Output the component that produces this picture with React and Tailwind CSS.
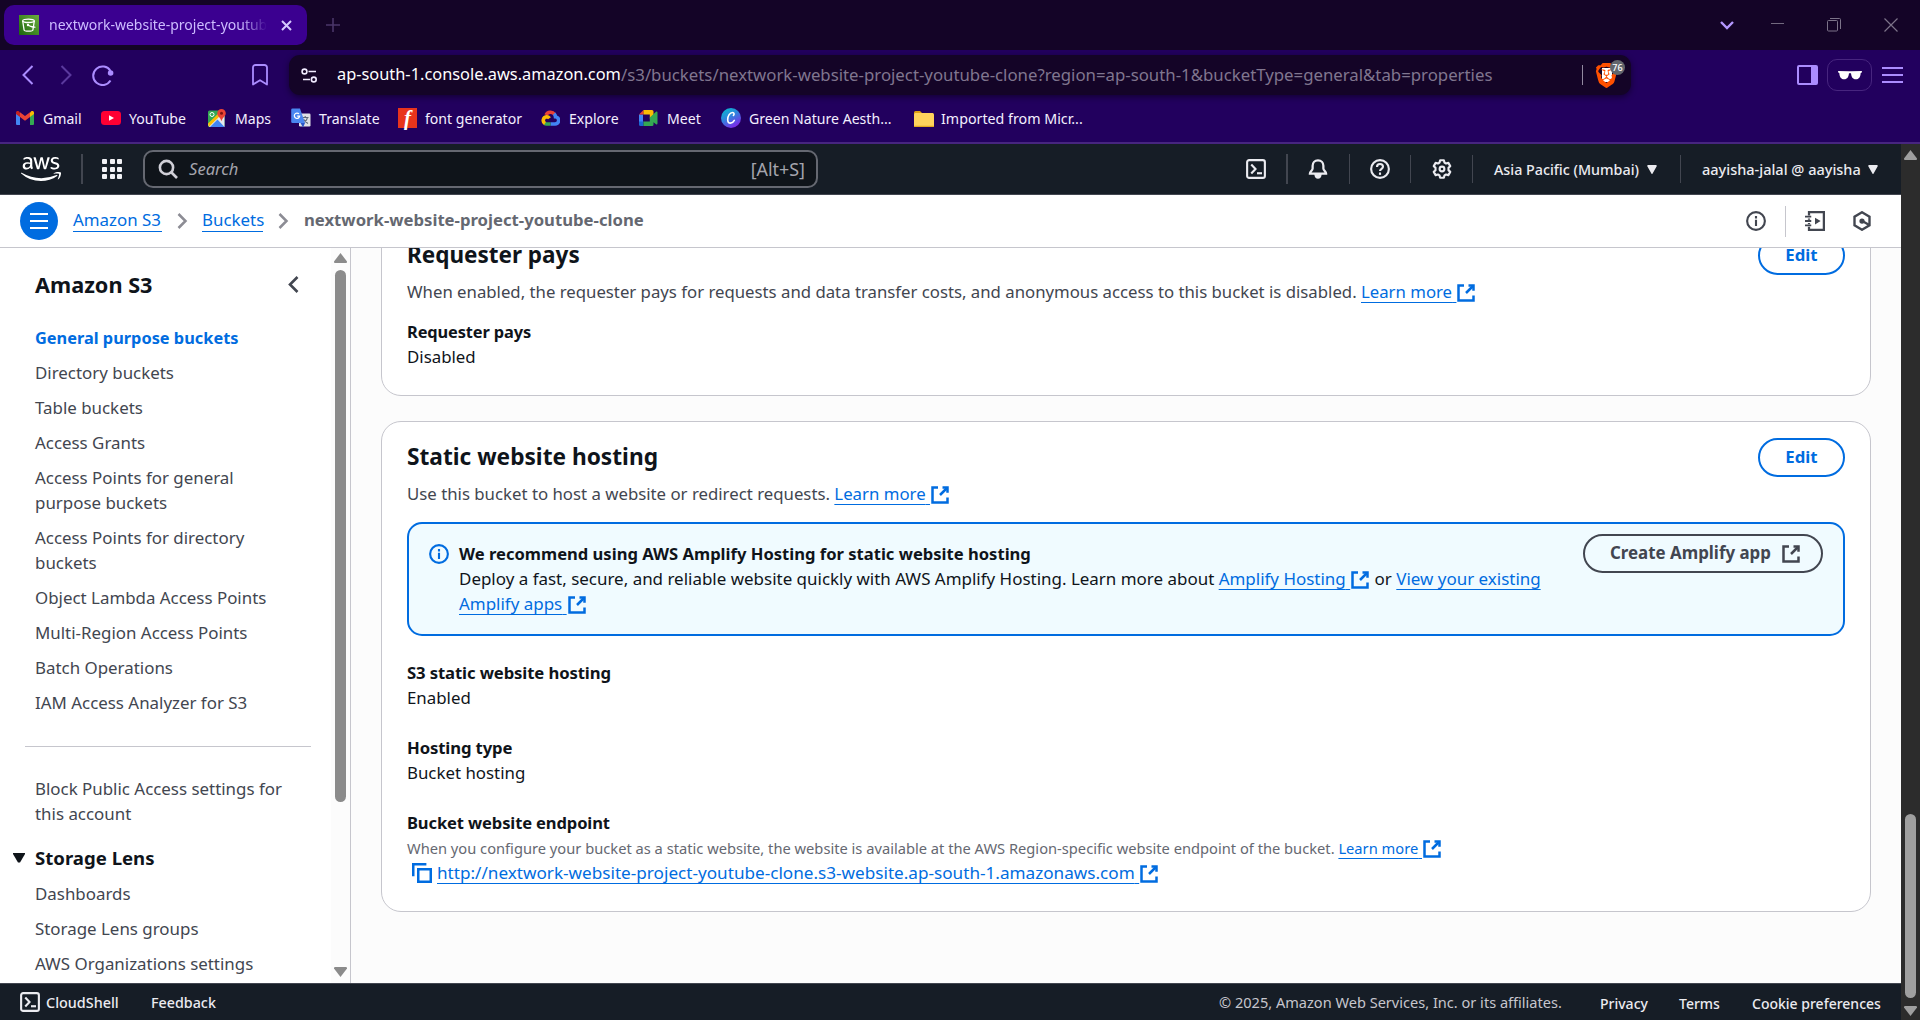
import { FaAws } from "react-icons/fa";
import { SiBrave } from "react-icons/si";

/* ---------- shared pieces ---------- */

function Icon({ children, className = "", size = 20, sw = 2 }) {
  return (
    <svg
      width={size}
      height={size}
      viewBox="0 0 16 16"
      fill="none"
      stroke="currentColor"
      strokeWidth={sw}
      className={"block shrink-0 " + className}
    >
      {children}
    </svg>
  );
}

function ExternalGlyph() {
  return (
    <>
      <path d="M10 2h4v4.2" />
      <path d="M8 8l5.8-5.8" />
      <path d="M6.4 2H2v12h12v-4" />
    </>
  );
}

function External() {
  return (
    <svg width="20" height="20" viewBox="0 0 16 16" fill="none" stroke="currentColor" strokeWidth="2" className="inline-block align-[-4.5px]">
      <ExternalGlyph />
    </svg>
  );
}

function Link({ children, external = true }) {
  return (
    <span className="whitespace-nowrap text-[#006ce0]">
      <span className="underline decoration-1 underline-offset-[4px] [text-decoration-skip-ink:none]">
        {children}
        {external ? "\u00a0" : ""}
      </span>
      {external && <External />}
    </span>
  );
}

function ShellIcon({ className = "" }) {
  return (
    <Icon className={className} sw={1.7}>
      <rect x="0.9" y="0.9" width="14.2" height="14.2" rx="1.6" />
      <path d="M4.2 4.4L7.6 8l-3.4 3.6" />
      <path d="M8.800 11.400h4" />
    </Icon>
  );
}

function Caret({ className = "" }) {
  return (
    <svg width="10" height="9" viewBox="0 0 10 9" className={"block shrink-0 " + className} fill="currentColor">
      <path d="M1 0h8a.8.8 0 0 1 .7 1.2L5.6 8.4a.7.7 0 0 1-1.2 0L.3 1.2A.8.8 0 0 1 1 0z" />
    </svg>
  );
}

/* ---------- browser chrome ---------- */

function TabStrip() {
  return (
    <div className="flex h-[50px] shrink-0 items-center bg-[#140427] pl-1">
      <div className="flex h-10 w-[303px] items-center rounded-[10px] bg-[#3b0090] pl-[15px]">
        <svg width="20" height="20" viewBox="0 0 20 20" className="shrink-0">
          <defs>
            <linearGradient id="s3" x1="0" y1="1" x2="1" y2="0">
              <stop offset="0" stopColor="#1b660f" />
              <stop offset="1" stopColor="#6cae3e" />
            </linearGradient>
          </defs>
          <rect width="20" height="20" fill="url(#s3)" />
          <g fill="none" stroke="#fff" strokeWidth="1.3">
            <ellipse cx="9.5" cy="5.8" rx="5.8" ry="1.7" />
            <path d="M3.7 6l1.4 9c.2 1.6 8.600 1.600 8.800 0l1.400-9" />
            <path d="M9 10c2 1.400 6 2.600 7.400 2" />
          </g>
          <circle cx="9" cy="10" r="1.200" fill="#fff" />
        </svg>
        <div className="ml-2.5 w-[218px] overflow-hidden pb-0.5 text-[14px] whitespace-nowrap text-[#cdbcff] [mask-image:linear-gradient(to_right,black_88%,transparent)]">
          nextwork-website-project-youtube-clone
        </div>
        <svg width="11" height="11" viewBox="0 0 11 11" className="ml-[14px]" stroke="#d6c8ff" strokeWidth="2">
          <path d="M1 1l9 9M10 1l-9 9" />
        </svg>
      </div>
      <svg width="14" height="14" viewBox="0 0 14 14" className="ml-[19px]" stroke="#4a3669" strokeWidth="1.600">
        <path d="M7 0v14M0 7h14" />
      </svg>
      <svg width="14" height="9" viewBox="0 0 14 9" className="ml-auto" fill="none" stroke="#b497ff" strokeWidth="2.400">
        <path d="M1 1l6 6 6-6" />
      </svg>
      <svg width="13" height="14" viewBox="0 0 13 14" className="ml-[37px]" stroke="#72697f" strokeWidth="1">
        <path d="M0 5.500h13" />
      </svg>
      <svg width="14" height="14" viewBox="0 0 14 14" className="ml-[43px]" fill="none" stroke="#7c7389" strokeWidth="1">
        <rect x="0.500" y="2.500" width="10" height="10.500" rx="1" />
        <path d="M3 .5h9.500a1 1 0 0 1 1 1V11" />
      </svg>
      <svg width="14" height="14" viewBox="0 0 14 14" className="mr-[22px] ml-[43px]" stroke="#7c7389" strokeWidth="1.200">
        <path d="M.5.500l13 13M13.500.500l-13 13" />
      </svg>
    </div>
  );
}

function Toolbar() {
  return (
    <div className="flex h-[50px] items-center">
      <svg width="12" height="20" viewBox="0 0 12 20" className="ml-[22px]" fill="none" stroke="#ab8cff" strokeWidth="2">
        <path d="M10.500 1L1.500 10l9 9" />
      </svg>
      <svg width="12" height="20" viewBox="0 0 12 20" className="ml-[26px]" fill="none" stroke="#5a399d" strokeWidth="2">
        <path d="M1.500 1l9 9-9 9" />
      </svg>
      <svg width="22" height="21" viewBox="0 0 22 21" className="ml-5" fill="none" stroke="#ab8cff" strokeWidth="2">
        <path d="M18.500 6A9.300 9.300 0 1 0 18.500 15.500" />
        <circle cx="18.600" cy="8" r="2.800" fill="#ab8cff" stroke="none" />
      </svg>
      <svg width="16" height="22" viewBox="0 0 16 22" className="ml-[138px]" fill="none" stroke="#ab8cff" strokeWidth="1.800" strokeLinejoin="round">
        <path d="M1 3.500A2.500 2.500 0 0 1 3.500 1h9A2.500 2.500 0 0 1 15 3.500V20.500l-7-4.300-7 4.300z" />
      </svg>
      <div className="ml-[21px] flex h-10 w-[1342px] items-center rounded-[11px] bg-[#140427] pl-3 shadow-[0_2px_6px_rgba(0,0,0,0.45)]">
        <svg width="17" height="15" viewBox="0 0 17 15" fill="none" stroke="#f0eaff" strokeWidth="1.600">
          <circle cx="3.500" cy="3.500" r="2.400" />
          <path d="M7.500 3.500H15M2 11.500h7" />
          <circle cx="12.800" cy="11.500" r="2.400" />
        </svg>
        <div className="ml-[19px] flex whitespace-nowrap">
          <span className="w-[284px] text-[16.36px] text-white">ap-south-1.console.aws.amazon.com</span>
          <span className="text-[16.79px] text-[#80768f]">
            /s3/buckets/nextwork-website-project-youtube-clone?region=ap-south-1&amp;bucketType=general&amp;tab=properties
          </span>
        </div>
        <div className="mr-[14px] ml-auto h-5 w-px bg-[#9289a0]" />
        <div className="relative mr-[14px] h-[23px] w-5">
          <div className="absolute top-[4px] left-[5px] h-3.5 w-2.5 bg-white" />
          <SiBrave className="absolute -top-px -left-[3px] h-[25px] w-[25px] text-[#ff5000]" />
          <div className="absolute -top-[4px] left-[13px] flex h-[15px] w-[15px] items-center justify-center rounded-full bg-[#63666d] text-[9px] leading-none font-medium text-white">
            76
          </div>
        </div>
      </div>
      <svg width="21" height="20" viewBox="0 0 21 20" className="ml-auto" fill="none" stroke="#ab8cff" strokeWidth="2">
        <rect x="1" y="1" width="19" height="18" rx="1" />
        <rect x="14" y="1" width="6" height="18" fill="#ab8cff" stroke="none" />
      </svg>
      <div className="ml-[9px] flex h-8 w-[45px] items-center justify-center rounded-[10px] border border-[#47257f]">
        <svg width="24" height="10" viewBox="0 0 24 10" fill="#fff">
          <path d="M0 1l10.500.3c1 0 2 0 3 0L24 1l-.4 1.800-.9.200c-.3 4-1.700 6.300-5 6.300-3 0-4.300-2.300-4.700-6h-2c-.4 3.700-1.700 6-4.700 6-3.300 0-4.700-2.300-5-6.300L.4 2.800z" />
        </svg>
      </div>
      <div className="mr-[17px] ml-2.5 flex w-[21px] flex-col gap-[5px]">
        <div className="h-0.5 bg-[#ab8cff]" />
        <div className="h-0.5 bg-[#ab8cff]" />
        <div className="h-0.5 bg-[#ab8cff]" />
      </div>
    </div>
  );
}

const bookmarks = [
  {
    name: "Gmail",
    cls: "w-[85px] gap-[9px]",
    icon: (
      <svg width="18" height="14" viewBox="0 0 18 14">
        <path d="M0 2.500V13a1 1 0 0 0 1 1h3V5z" fill="#4285f4" />
        <path d="M18 2.500V13a1 1 0 0 1-1 1h-3V5z" fill="#34a853" />
        <path d="M14 1.500V6l4-3V1.800C18 .2 16.300-.5 15 .500z" fill="#fbbc04" />
        <path d="M0 3l4 3V1.500L3 .500C1.700-.5 0 .2 0 1.800z" fill="#c5221f" />
        <path d="M4 6V1.300L9 5l5-3.700V6L9 9.700z" fill="#ea4335" />
      </svg>
    ),
  },
  {
    name: "YouTube",
    cls: "w-[107px] gap-2",
    icon: (
      <svg width="20" height="14" viewBox="0 0 20 14">
        <rect width="20" height="14" rx="3.500" fill="#ff0033" />
        <path d="M8 4.200l5 2.800-5 2.800z" fill="#fff" />
      </svg>
    ),
  },
  {
    name: "Maps",
    cls: "w-[83px] gap-[9px]",
    icon: (
      <svg width="18" height="19" viewBox="0 0 18 19">
        <rect x="0" y="1.500" width="16.500" height="16.500" rx="1.500" fill="#34a853" />
        <path d="M0 15.500L12.500 3l4 4v11H1.500z" fill="#e8eaed" />
        <path d="M2 18l7.500-7.500 7 7.500z" fill="#4285f4" />
        <path d="M0 14.500L11 4l2 2L1 17.800z" fill="#fbbc04" />
        <circle cx="4" cy="5.500" r="2" fill="none" stroke="#fff" />
        <path d="M13.500 0a4.300 4.300 0 0 1 4.300 4.300c0 3-3.300 4-4.300 8-1-4-4.300-5-4.300-8A4.300 4.300 0 0 1 13.500 0z" fill="#ea4335" />
        <circle cx="13.500" cy="4.300" r="1.500" fill="#811411" />
      </svg>
    ),
  },
  {
    name: "Translate",
    cls: "w-[107px] gap-2",
    icon: (
      <svg width="20" height="20" viewBox="0 0 20 20">
        <rect x="8" y="5.500" width="11.500" height="13" rx="1.200" fill="#dfe1e5" />
        <path d="M11 9.500h6.500M14.200 8v1.500M16.500 9.500c-.5 2.500-2.500 4.500-4.500 5.500M12.500 11c.8 1.800 2.500 3.500 4.500 4.500" stroke="#5f6b7a" strokeWidth="1.100" fill="none" />
        <path d="M1.500.500H9l5 14.500H1.500A1.300 1.300 0 0 1 .2 13.700V1.800A1.300 1.300 0 0 1 1.500.500z" fill="#4a86f0" />
        <path d="M9.500 15H14l-2 4.500z" fill="#2a56c6" />
        <path d="M8 5.900a2.700 2.700 0 1 0 .7 2.300H6.200" stroke="#fff" strokeWidth="1.200" fill="none" />
      </svg>
    ),
  },
  {
    name: "font generator",
    cls: "w-[143px] gap-2",
    icon: (
      <div className="flex h-5 w-[19px] items-center justify-center bg-[#e8341c] font-['Liberation_Serif'] text-[21px] leading-none font-bold text-white italic">
        f
      </div>
    ),
  },
  {
    name: "Explore",
    cls: "w-[98px] gap-[9px]",
    icon: (
      <svg width="19" height="16" viewBox="0 0 19 16" fill="none" strokeWidth="3.600">
        <path d="M5 5A5 5 0 0 1 13.500 4.300" stroke="#ea4335" />
        <path d="M13 3.800a5 5 0 0 1 1.500 3A3.600 3.600 0 0 1 13.500 14H9.500" stroke="#4285f4" />
        <path d="M9.500 14H5.500a3.500 3.500 0 0 1-2-.7" stroke="#34a853" />
        <path d="M4 13.500a3.700 3.700 0 0 1 1.500-6.800 3.700 3.700 0 0 1 3 1.500" stroke="#fbbc04" />
      </svg>
    ),
  },
  {
    name: "Meet",
    cls: "w-[82px] gap-[9px]",
    icon: (
      <svg width="19" height="16" viewBox="0 0 19 16">
        <path d="M0 4.500h4V12H0z" fill="#4285f4" />
        <path d="M4.500 0v4.500H0z" fill="#ea4335" />
        <path d="M4.500 0H13a1.500 1.500 0 0 1 1.500 1.500V8l-3.700.5V4.500H4.500z" fill="#fbbc04" />
        <path d="M0 11.500h4.500V16H1.500A1.500 1.500 0 0 1 0 14.500z" fill="#1967d2" />
        <path d="M4.500 11.500h6.300V7.500L17 1.800c.6-.5 1.500-.2 1.500.7v11c0 .9-.9 1.200-1.500.700l-2.500-2v2.300A1.500 1.500 0 0 1 13 16H4.500z" fill="#34a853" />
      </svg>
    ),
  },
  {
    name: "Green Nature Aesth...",
    cls: "w-[193px] gap-2",
    icon: (
      <svg width="20" height="20" viewBox="0 0 20 20">
        <defs>
          <linearGradient id="cv" x1="0" y1="0" x2=".6" y2="1">
            <stop offset="0" stopColor="#00c4cc" />
            <stop offset=".5" stopColor="#2f86dd" />
            <stop offset="1" stopColor="#7d2ae8" />
          </linearGradient>
        </defs>
        <circle cx="10" cy="10" r="10" fill="url(#cv)" />
        <path d="M12.400 7.500c1-.9 1-3-.9-3-2.600 0-4.800 3.500-4.800 6.900 0 2.300 1.100 3.700 2.800 3.700 1.600 0 2.900-1 3.800-2.700" stroke="#fff" strokeWidth="1.600" fill="none" strokeLinecap="round" />
      </svg>
    ),
  },
  {
    name: "Imported from Micr...",
    cls: "w-[180px] gap-[7px] text-[14.250px]",
    icon: (
      <svg width="20" height="16" viewBox="0 0 20 16">
        <path d="M0 1.500A1.500 1.500 0 0 1 1.500 0H6l2 2H19v4H0z" fill="#e0a011" />
        <rect y="2" width="20" height="14" rx="1.500" fill="#ffd35c" />
        <rect y="14.800" width="20" height="1.200" rx=".6" fill="#e3a921" />
      </svg>
    ),
  },
];

function Bookmarks() {
  return (
    <div className="flex h-[37px] items-center pl-4 text-[14.1px] whitespace-nowrap text-[#f3efff]">
      {bookmarks.map((b) => (
        <div key={b.name} className={"flex shrink-0 items-center " + b.cls}>
          <div className="shrink-0">{b.icon}</div>
          {b.name}
        </div>
      ))}
    </div>
  );
}

/* ---------- console header ---------- */

function ConsoleHeader() {
  return (
    <div className="flex h-[51px] shrink-0 items-center border-b border-[#424650] bg-[#161d26] text-[#ebebf0]">
      <FaAws className="ml-[21px] h-8 w-10 shrink-0 text-white" />
      <div className="ml-5 h-[30px] w-0.5 bg-[#424650]" />
      <div className="ml-[19px] grid grid-cols-3 gap-[2.500px]">
        {[...Array(9)].map((_, i) => (
          <div key={i} className="h-[5px] w-[5px] rounded-[1px] bg-[#f1f1f5]" />
        ))}
      </div>
      <div className="ml-[21px] flex h-[38px] w-[675px] items-center rounded-[10px] border-2 border-[#656871] bg-[#0f141a] px-[13px]">
        <svg width="20" height="20" viewBox="0 0 20 20" fill="none" stroke="#d0d0d8" strokeWidth="2.600">
          <circle cx="8.500" cy="8.500" r="6.600" />
          <path d="M13 13l6 6" />
        </svg>
        <span className="ml-[11px] text-[16.6px] text-[#a4a4ad] italic">Search</span>
        <span className="mr-[-2px] ml-auto text-[17.9px] text-[#a4a4ad]">[Alt+S]</span>
      </div>
      <ShellIcon className="ml-auto" />
      <div className="ml-5 h-[30px] w-0.5 bg-[#424650]" />
      <Icon className="ml-5" sw={1.8}>
        <path d="M8 1.100c-2.700 0-4.300 1.900-4.300 4.300v2.100c0 1.700-2.200 2.500-2.200 4.200h13c0-1.700-2.200-2.500-2.200-4.200V5.400c0-2.400-1.600-4.300-4.300-4.300z" />
        <path d="M6 12.500c.2 1.700.9 2.300 2 2.300s1.800-.6 2-2.300z" fill="currentColor" />
      </Icon>
      <div className="ml-[21px] h-[30px] w-px bg-[#424650]" />
      <Icon className="ml-5" sw={1.700}>
        <circle cx="8" cy="8" r="7.100" />
        <path d="M5.600 6.400C5.600 4.900 6.700 4 8 4s2.400.9 2.400 2.200C10.400 7.800 8 7.900 8 9.600" />
        <path d="M8 10.800v1.900" />
      </Icon>
      <div className="ml-5 h-7 w-px bg-[#424650]" />
      <Icon className="ml-[21px]" sw={1.700}>
        <path
          strokeLinejoin="round"
          d="M6.500 1h3l.5 1.900 1.200.7 1.900-.5 1.500 2.600L13.200 7v1.900l1.400 1.400-1.500 2.600-1.900-.5-1.200.7L9.500 15h-3L6 13.100l-1.200-.7-1.900.5-1.500-2.600L2.800 9V7L1.400 5.700l1.500-2.600 1.900.5L6 2.900z"
        />
        <circle cx="8" cy="8" r="1.900" />
      </Icon>
      <div className="ml-5 h-7 w-px bg-[#424650]" />
      <span className="ml-[21px] w-[145px] pt-0.5 text-[14.3px] font-medium whitespace-nowrap">Asia Pacific (Mumbai)</span>
      <Caret className="ml-2" />
      <div className="ml-[23px] h-7 w-px bg-[#424650]" />
      <span className="ml-[21px] w-[159px] pt-0.5 text-[14.5px] font-medium whitespace-nowrap">aayisha-jalal @ aayisha</span>
      <Caret className="mr-[23px] ml-[7px]" />
    </div>
  );
}

function Chevron({ className = "" }) {
  return (
    <svg width="11" height="16" viewBox="0 0 11 16" fill="none" stroke="#8c8c94" strokeWidth="2.500" className={"shrink-0 " + className}>
      <path d="M1.500 1l7 7-7 7" />
    </svg>
  );
}

function BreadcrumbBar() {
  const link = "mb-[2px] border-b border-[#006ce0] text-[#006ce0] leading-[22px]";
  return (
    <div className="flex h-[53px] shrink-0 items-center border-b border-[#c6c6cd] bg-white text-[16.900px] whitespace-nowrap">
      <div className="ml-5 flex h-[38px] w-[38px] shrink-0 flex-col items-center justify-center gap-[5px] rounded-full bg-[#006ce0]">
        <div className="h-0.5 w-[18px] bg-white" />
        <div className="h-0.5 w-[18px] bg-white" />
        <div className="h-0.5 w-[18px] bg-white" />
      </div>
      <span className={"ml-[15px] w-[89px] " + link}>Amazon S3</span>
      <Chevron className="ml-[15px]" />
      <span className={"ml-[14px] w-[61px] " + link}>Buckets</span>
      <Chevron className="ml-[15px]" />
      <span className="mb-[2px] ml-[15px] text-[16.700px] leading-[24px] font-bold text-[#656871]">nextwork-website-project-youtube-clone</span>
      <Icon className="ml-auto text-[#424650]" sw={1.700}>
        <circle cx="8" cy="8" r="7.100" />
        <path d="M8 7v5M8 4v2" />
      </Icon>
      <div className="ml-[19px] h-[31px] w-px bg-[#c6c6cd]" />
      <Icon className="ml-[19px] text-[#424650]" sw={1.800}>
        <path d="M3.200 3.500V.900h11.900v14.200H3.200v-2.600M3.200 6v1M3.200 9.500v1" />
        <path d="M0 4.500h5M0 8h5M0 11.500h5" strokeWidth="1.500" />
        <path d="M8 5.300l4.500 2.700L8 10.700z" fill="currentColor" stroke="none" />
      </Icon>
      <Icon className="mr-[29px] ml-[27px] text-[#424650]" sw={1.900}>
        <path d="M8 1l6 3.500v7L8 15l-6-3.500v-7z" />
        <circle cx="8" cy="8" r="2.100" fill="currentColor" stroke="none" />
        <path d="M8.500 8.200l5 2.800" />
      </Icon>
    </div>
  );
}

/* ---------- side navigation ---------- */

const navItems = [
  "Directory buckets",
  "Table buckets",
  "Access Grants",
  "Access Points for general purpose buckets",
  "Access Points for directory buckets",
  "Object Lambda Access Points",
  "Multi-Region Access Points",
  "Batch Operations",
  "IAM Access Analyzer for S3",
];

function SideNav() {
  return (
    <div className="flex h-full w-[351px] shrink-0 border-r border-[#c6c6cd] bg-white">
      <nav className="h-full w-[331px] overflow-hidden text-[16.900px] leading-[25px] text-[#424650]">
        <div className="mt-[22px] flex h-[30px] items-center pr-8 pl-[35px]">
          <span className="text-[21.700px] leading-[30px] font-bold text-[#0f141a]">Amazon S3</span>
          <svg width="11" height="17" viewBox="0 0 11 17" className="mb-0.5 ml-auto" fill="none" stroke="#424650" strokeWidth="2.600">
            <path d="M9.500 1L2 8.500l7.500 7.500" />
          </svg>
        </div>
        <div className="mt-[25px] flex flex-col gap-2.5 pl-[35px]">
          <span className="h-[25px] text-[16.350px] leading-[27px] font-bold text-[#006ce0]">General purpose buckets</span>
          {navItems.map((t) => (
            <span key={t} className="w-[240px]">
              {t}
            </span>
          ))}
        </div>
        <div className="mt-[31px] ml-[25px] h-px w-[286px] bg-[#c6c6cd]" />
        <div className="mt-[29px] w-[290px] pl-[35px]">Block Public Access settings for this account</div>
        <div className="mt-[19px] flex items-center pl-[13px]">
          <svg width="12" height="10" viewBox="0 0 12 10" fill="#0f141a">
            <path d="M0 0h12v1L7 9.500H5L0 1z" />
          </svg>
          <span className="ml-2.5 text-[18.580px] font-bold text-[#0f141a]">Storage Lens</span>
        </div>
        <div className="mt-[11px] flex flex-col gap-2.5 pl-[35px]">
          <span>Dashboards</span>
          <span>Storage Lens groups</span>
          <span>AWS Organizations settings</span>
        </div>
      </nav>
      <div className="flex w-[19px] flex-col items-center bg-[#fcfcfc]">
        <svg width="13" height="10" viewBox="0 0 13 10" className="mt-[5px]" fill="#8b8b8b">
          <path d="M6.500 0L13 8.500c0 1-.5 1.500-1.200 1.500H1.200C.5 10 0 9.500 0 8.500z" />
        </svg>
        <div className="mt-[7px] h-[532px] w-[11px] rounded-full bg-[#8b8b8b]" />
        <svg width="13" height="10" viewBox="0 0 13 10" className="mt-auto mb-1.5" fill="#8b8b8b">
          <path d="M6.500 10L13 1.500C13 .5 12.500 0 11.800 0H1.200C.5 0 0 .5 0 1.500z" />
        </svg>
      </div>
    </div>
  );
}

/* ---------- main panel ---------- */

function EditButton() {
  return (
    <button className="h-[39px] w-[87px] shrink-0 rounded-full border-2 border-[#006ce0] bg-white pb-0.5 text-[16.800px] leading-[25px] font-bold text-[#006ce0]">
      Edit
    </button>
  );
}

function Field({ label, value, className = "", labelClass = "text-[16.700px]" }) {
  return (
    <div className={className}>
      <div className={"font-bold tracking-[-0.12px] " + labelClass}>{label}</div>
      <div>{value}</div>
    </div>
  );
}

function Main() {
  return (
    <main className="flex min-w-0 flex-1 flex-col overflow-hidden bg-[#fcfcfc] pr-[30px] pl-[30px] text-[16.850px] leading-[25px] text-[#0f141a]">
      <section className="-mt-[30px] h-[178px] shrink-0 rounded-[20px] border border-[#c6c6cd] bg-white px-[25px] pt-[17px]">
        <div className="flex items-start justify-between">
          <h2 className="mt-1 text-[22.500px] leading-[30px] font-bold">Requester pays</h2>
          <EditButton />
        </div>
        <p className="mt-1 text-[16.760px] whitespace-nowrap text-[#424650]">
          When enabled, the requester pays for requests and data transfer costs, and anonymous access to this bucket is disabled.{" "}
          <Link>Learn more</Link>
        </p>
        <Field className="mt-[15px]" label="Requester pays" value="Disabled" labelClass="text-[16.400px]" />
      </section>

      <section className="mt-[25px] h-[491px] shrink-0 rounded-[20px] border border-[#c6c6cd] bg-white px-[25px] pt-4">
        <div className="flex items-start justify-between">
          <h2 className="mt-1 text-[22.700px] leading-[30px] font-bold">Static website hosting</h2>
          <EditButton />
        </div>
        <p className="mt-1 text-[16.800px] text-[#424650]">
          Use this bucket to host a website or redirect requests. <Link>Learn more</Link>
        </p>

        <div className="mt-[16px] flex h-[114px] items-start rounded-[15px] border-2 border-[#006ce0] bg-[#f0fbff] pr-5 pl-5">
          <Icon className="mt-5 text-[#006ce0]" sw={1.700}>
            <circle cx="8" cy="8" r="7.100" />
            <path d="M8 7v5M8 4v1.900" />
          </Icon>
          <div className="mt-[17px] ml-2.5 w-[1110px] text-[16.970px]">
            <div className="text-[16.580px] font-bold">We recommend using AWS Amplify Hosting for static website hosting</div>
            <div className="whitespace-nowrap">
              Deploy a fast, secure, and reliable website quickly with AWS Amplify Hosting. Learn more about <Link>Amplify Hosting</Link> or{" "}
              <Link external={false}>View your existing</Link>
            </div>
            <div>
              <Link>Amplify apps</Link>
            </div>
          </div>
          <button className="mt-2.5 ml-auto flex h-[39px] w-[240px] items-center rounded-full border-2 border-[#424650] pl-[25px] text-[16.890px] leading-[25px] font-bold whitespace-nowrap text-[#424650]">
            <span className="pb-0.5">Create Amplify app</span>
            <Icon className="ml-2.5">
              <ExternalGlyph />
            </Icon>
          </button>
        </div>

        <Field className="mt-[24px]" label="S3 static website hosting" value="Enabled" />
        <Field className="mt-[25px]" label="Hosting type" value="Bucket hosting" />
        <div className="mt-[25px]">
          <div className="text-[16.550px] font-bold tracking-[-0.12px]">Bucket website endpoint</div>
          <div className="mt-px text-[14.680px] whitespace-nowrap text-[#656871]">
            When you configure your bucket as a static website, the website is available at the AWS Region-specific website endpoint of the bucket.{" "}
            <Link>Learn more</Link>
          </div>
          <div className="-mt-px flex items-center pl-[5px] text-[17.150px] text-[#006ce0]">
            <Icon>
              <path d="M1 10.500V1h10.500" />
              <rect x="5" y="5" width="10" height="10" />
            </Icon>
            <span className="ml-[5px]">
              <Link>http://nextwork-website-project-youtube-clone.s3-website.ap-south-1.amazonaws.com</Link>
            </span>
          </div>
        </div>
      </section>
    </main>
  );
}

function Footer() {
  return (
    <footer className="flex h-[37px] shrink-0 items-center border-t border-[#424650] bg-[#161d26] text-[14.400px] font-medium whitespace-nowrap text-[#ebebf0]">
      <ShellIcon className="ml-5" />
      <span className="ml-[6px] w-[73px] pt-0.5">CloudShell</span>
      <span className="ml-8 pt-0.5 text-[14.300px]">Feedback</span>
      <span className="ml-auto w-[343px] pt-0.5 text-[14.570px] font-normal text-[#c6c6cd]">© 2025, Amazon Web Services, Inc. or its affiliates.</span>
      <span className="ml-[38px] w-[49px] pt-0.5 text-[14px]">Privacy</span>
      <span className="ml-[30px] w-[41px] pt-0.5 text-[14px]">Terms</span>
      <span className="mr-5 ml-8 w-[129px] pt-0.5 text-[14px]">Cookie preferences</span>
    </footer>
  );
}

export default function App() {
  return (
    <div className="flex h-[1020px] w-[1920px] flex-col overflow-hidden font-['Noto_Sans',sans-serif]">
      <TabStrip />
      <div className="h-[94px] shrink-0 border-b-2 border-[#47257f] bg-[#22005e]">
        <Toolbar />
        <Bookmarks />
      </div>
      <div className="flex min-h-0 flex-1">
        <div className="flex w-[1901px] flex-col">
          <ConsoleHeader />
          <BreadcrumbBar />
          <div className="flex min-h-0 flex-1">
            <SideNav />
            <Main />
          </div>
          <Footer />
        </div>
        <div className="flex w-[19px] flex-col items-center bg-[#2c2c2c]">
          <svg width="13" height="10" viewBox="0 0 13 10" className="mt-1.5 shrink-0" fill="#9f9f9f">
            <path d="M6.500 0L13 8.500c0 1-.5 1.500-1.200 1.500H1.200C.5 10 0 9.500 0 8.500z" />
          </svg>
          <div className="mt-auto h-[184px] w-[11px] shrink-0 rounded-full bg-[#9f9f9f]" />
          <svg width="13" height="10" viewBox="0 0 13 10" className="mt-2 mb-1 shrink-0" fill="#9f9f9f">
            <path d="M6.500 10L13 1.500C13 .5 12.500 0 11.800 0H1.200C.5 0 0 .5 0 1.500z" />
          </svg>
        </div>
      </div>
    </div>
  );
}
